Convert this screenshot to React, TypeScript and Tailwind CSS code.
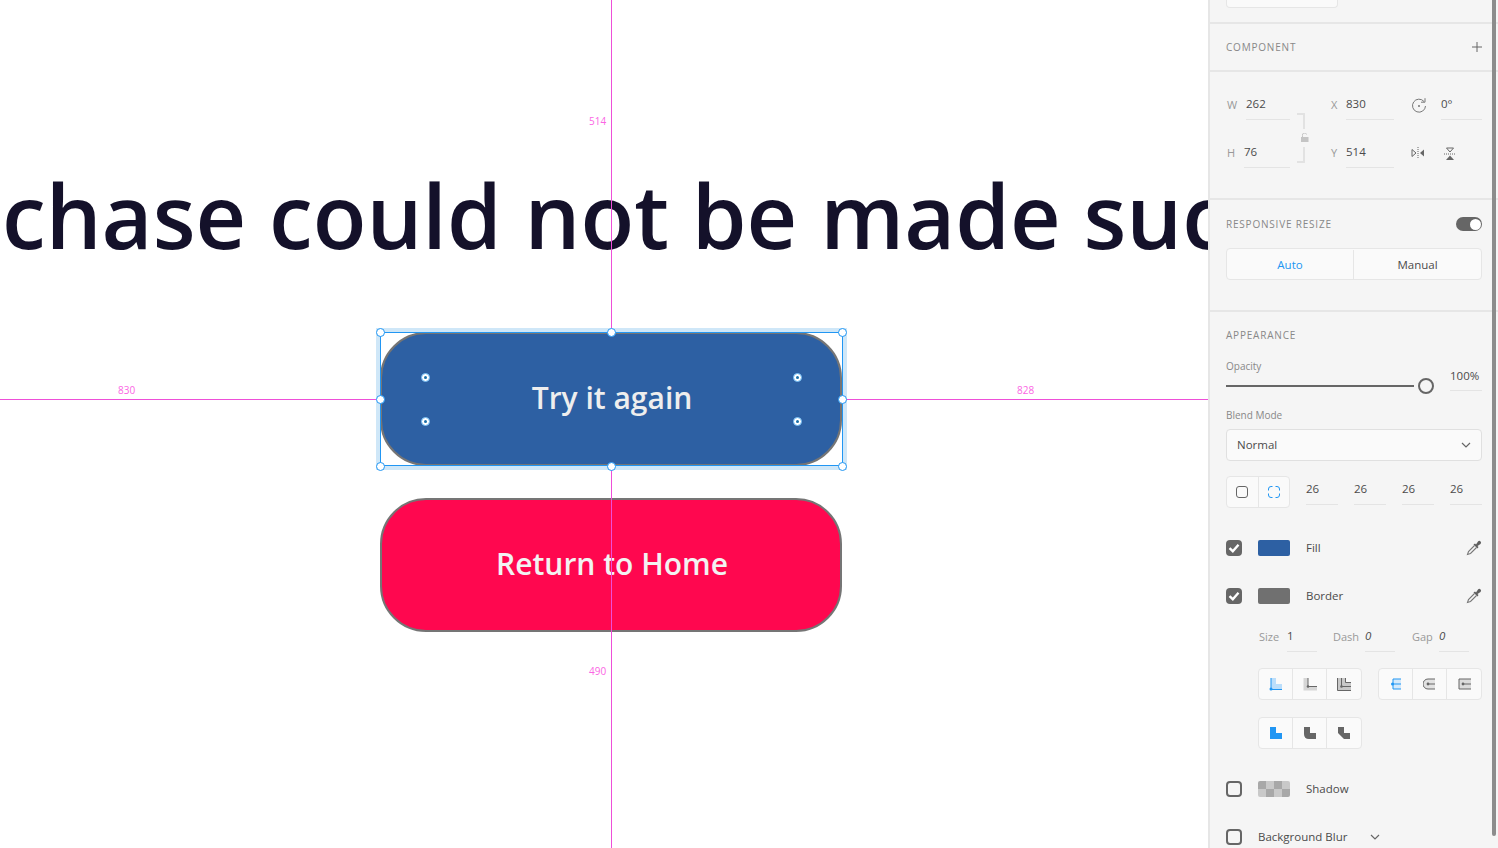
function Handle({ className }: { className: string }) {
  return <div className={`absolute h-[9px] w-[9px] rounded-full border border-[#2196f3] bg-white ${className}`} />;
}

function RadiusDot({ className }: { className: string }) {
  return (
    <div className={`absolute flex h-[9px] w-[9px] items-center justify-center rounded-full border border-[#6db9f2] bg-white ${className}`}>
      <div className="h-[3px] w-[3px] rounded-full bg-[#1a6fa8]" />
    </div>
  );
}

function Canvas() {
  return (
    <div className="relative h-full flex-1 overflow-hidden bg-white font-['Open_Sans',sans-serif]">
      <div className="absolute left-[2px] top-[155px] whitespace-nowrap text-[88px] font-semibold leading-[120px] text-[#14112a]">
        chase could not be made suc
      </div>

      <div className="absolute left-[380px] top-[332px] flex h-[134px] w-[462px] items-center justify-center rounded-[46px] border-2 border-[#757575] bg-[#2d60a3] pb-[4px] pl-[2px] text-[30px] font-semibold text-[#eeeeee]">
        Try it again
      </div>
      <div className="absolute left-[380px] top-[498px] flex h-[134px] w-[462px] items-center justify-center rounded-[46px] border-2 border-[#757575] bg-[#ff074f] pb-[4px] pl-[2px] text-[30px] font-semibold text-[#f2f2f2]">
        Return to Home
      </div>

      <div className="absolute left-[611px] top-0 h-[332px] w-px bg-[#ee4fd8]" />
      <div className="absolute left-[611px] top-[466px] h-[382px] w-px bg-[#ee4fd8]" />
      <div className="absolute left-0 top-[399px] h-px w-[380px] bg-[#ee4fd8]" />
      <div className="absolute left-[843px] top-[399px] h-px w-[365px] bg-[#ee4fd8]" />

      <div className="absolute left-[589px] top-[114px] text-[10px] leading-[14px] text-[#fb66e4]">514</div>
      <div className="absolute left-[118px] top-[383px] text-[10px] leading-[14px] text-[#fb66e4]">830</div>
      <div className="absolute left-[1017px] top-[383px] text-[10px] leading-[14px] text-[#fb66e4]">828</div>
      <div className="absolute left-[589px] top-[664px] text-[10px] leading-[14px] text-[#fb66e4]">490</div>

      <div className="absolute left-[376px] top-[328px] h-[142px] w-[471px] border-[4px] border-[#cfe7f8]" />
      <div className="absolute left-[380px] top-[332px] h-[134px] w-[463px] border border-[#2196f3]" />
      <Handle className="left-[376px] top-[328px]" />
      <Handle className="left-[607px] top-[328px]" />
      <Handle className="left-[838px] top-[328px]" />
      <Handle className="left-[376px] top-[395px]" />
      <Handle className="left-[838px] top-[395px]" />
      <Handle className="left-[376px] top-[462px]" />
      <Handle className="left-[607px] top-[462px]" />
      <Handle className="left-[838px] top-[462px]" />
      <RadiusDot className="left-[421px] top-[373px]" />
      <RadiusDot className="left-[793px] top-[373px]" />
      <RadiusDot className="left-[421px] top-[417px]" />
      <RadiusDot className="left-[793px] top-[417px]" />
    </div>
  );
}

function Field({ label, value, labelW, w, italic }: { label: string; value: string; labelW: string; w: string; italic?: boolean }) {
  return (
    <div className="flex items-start">
      <span className={`${labelW} pt-[1px] text-[11px] leading-[16px] text-[#999999]`}>{label}</span>
      <div className={`${w} h-[24px] border-b border-[#e4e4e4] text-[11.5px] leading-[16px] text-[#4b4b4b] ${italic ? "italic" : ""}`}>{value}</div>
    </div>
  );
}

function Check({ on }: { on: boolean }) {
  if (!on) return <div className="h-[16px] w-[16px] rounded-[4px] border-2 border-[#666666] bg-[#f5f5f5]" />;
  return (
    <div className="flex h-[16px] w-[16px] items-center justify-center rounded-[4px] bg-[#666666]">
      <svg width="12" height="12" viewBox="0 0 12 12" fill="none" stroke="white" strokeWidth="2.4">
        <path d="M1.5 6.2 L4.8 9.2 L10.5 2.8" />
      </svg>
    </div>
  );
}

function Dropper() {
  return (
    <svg width="16" height="16" viewBox="0 0 16 16" fill="none">
      <path d="M8.5 5.5 L2.5 11.5 L1.5 14.5 L4.5 13.5 L10.5 7.5" stroke="#777777" strokeWidth="1.1" fill="#f5f5f5" />
      <path d="M7.5 4.5 L9 3.5 L10 4.5 L12 1.5 Q13.2 0.3 14.6 1.4 Q15.7 2.8 14.5 4 L11.5 6 L12.5 7 L11.5 8.5 Z" fill="#5f5f5f" />
    </svg>
  );
}

function BtnGroup({ children }: { children: React.ReactNode }) {
  return (
    <div className="flex h-[32px] overflow-hidden rounded-[4px] border border-[#e6e6e6] bg-[#fafafa]">{children}</div>
  );
}

function Cell({ children, last }: { children: React.ReactNode; last?: boolean }) {
  return <div className={`flex h-full w-[34px] items-center justify-center ${last ? "" : "border-r border-[#e6e6e6]"}`}>{children}</div>;
}

function AlignIcon({ kind }: { kind: number }) {
  const blue = "#2196f3";
  const gray = "#666666";
  if (kind === 0)
    return (
      <svg width="13" height="13" viewBox="0 0 13 13">
        <path d="M2 0H7V6H13V11H2Z" fill="#bbdefb" />
        <path d="M2 0V11.5H13" fill="none" stroke={blue} strokeWidth="1" />
        <circle cx="2" cy="11" r="1.5" fill={blue} />
      </svg>
    );
  if (kind === 1)
    return (
      <svg width="14" height="13" viewBox="0 0 14 13">
        <path d="M0.5 0H5V8H14V12.5H0.5Z" fill="#d6d6d6" />
        <path d="M5 0V8.5H14" fill="none" stroke={gray} strokeWidth="1" />
        <circle cx="5" cy="8.5" r="1.3" fill={gray} />
      </svg>
    );
  if (kind === 2)
    return (
      <svg width="14" height="13" viewBox="0 0 14 13">
        <path d="M0.5 0H8V4H14V12.5H0.5Z" fill="#c8c8c8" />
        <path d="M0.5 0V12.5H14M4.5 0V8.5H14M8.5 0V4.5H14" fill="none" stroke={gray} strokeWidth="1" />
        <circle cx="4.5" cy="8.5" r="1.3" fill={gray} />
      </svg>
    );
  if (kind === 3)
    return (
      <svg width="10" height="12" viewBox="0 0 10 12">
        <path d="M2 1H10V11H2Z" fill="#d6eafb" />
        <path d="M10 1H2V11H10M2 6H10" fill="none" stroke={blue} strokeWidth="1" />
        <circle cx="1.5" cy="6" r="1.5" fill={blue} />
      </svg>
    );
  if (kind === 4)
    return (
      <svg width="13" height="12" viewBox="0 0 13 12">
        <path d="M12 1H5A5 5 0 0 0 5 11H12Z" fill="#e2e2e2" />
        <path d="M12 1H5A5 5 0 0 0 5 11H12M5 6H12" fill="none" stroke={gray} strokeWidth="1" />
        <circle cx="5" cy="6" r="1.4" fill={gray} />
      </svg>
    );
  return (
    <svg width="13" height="12" viewBox="0 0 13 12">
      <path d="M1 1H13V11H1Z" fill="#dcdcdc" />
      <path d="M13 1H1V11H13M5 6H13" fill="none" stroke={gray} strokeWidth="1" />
      <circle cx="5" cy="6" r="1.4" fill={gray} />
    </svg>
  );
}

function JoinIcon({ kind }: { kind: number }) {
  const d = kind === 0 ? "M1 1H7V7H13V13H1Z" : kind === 1 ? "M1 1H7V7H13V13H6Q1 13 1 8Z" : "M1 1H7V7H13V13H7L1 7Z";
  return (
    <svg width="14" height="14" viewBox="0 0 14 14">
      <path d={d} fill={kind === 0 ? "#2196f3" : "#666666"} />
    </svg>
  );
}

function Panel() {
  return (
    <div className="relative h-full w-[290px] shrink-0 overflow-hidden border-l-2 border-[#e6e6e6] bg-[#f5f5f5] font-['Open_Sans',sans-serif]">
      <div className="h-[24px] border-b-2 border-[#e6e6e6] pl-[16px]">
        <div className="h-[8px] w-[112px] rounded-b-[4px] border border-t-0 border-[#e6e6e6] bg-[#fafafa]" />
      </div>

      <div className="flex h-[48px] items-center justify-between border-b-2 border-[#e6e6e6] pl-[16px] pr-[16px]">
        <span className="text-[10px] tracking-[0.08em] text-[#888888]">COMPONENT</span>
        <svg width="10" height="10" viewBox="0 0 10 10" stroke="#666666" strokeWidth="1">
          <path d="M5 0V10M0 5H10" />
        </svg>
      </div>

      <div className="relative h-[128px] border-b-2 border-[#e6e6e6] pl-[17px] pt-[24px]">
        <div className="flex">
          <div className="flex w-[104px] flex-col gap-[24px]">
            <Field label="W" value="262" labelW="w-[19px]" w="w-[44px]" />
            <Field label="H" value="76" labelW="w-[17px]" w="w-[46px]" />
          </div>
          <div className="flex w-[80px] flex-col gap-[24px]">
            <Field label="X" value="830" labelW="w-[15px]" w="w-[48px]" />
            <Field label="Y" value="514" labelW="w-[15px]" w="w-[48px]" />
          </div>
          <div className="flex flex-col gap-[24px]">
            <div className="flex items-start">
              <div className="flex w-[30px] pt-[1px]">
                <svg width="16" height="16" viewBox="0 0 16 16" fill="none" stroke="#777777" strokeWidth="1">
                  <path d="M13 4.5A6.5 6.5 0 1 0 14.5 9" />
                  <path d="M14 1.2V5.2H10" />
                  <circle cx="8" cy="9" r="0.6" fill="#777777" />
                </svg>
              </div>
              <div className="h-[24px] w-[41px] border-b border-[#e4e4e4] text-[11.5px] leading-[16px] text-[#4b4b4b]">0°</div>
            </div>
            <div className="flex h-[24px] items-start gap-[19px] pt-[3px]">
              <svg width="14" height="12" viewBox="0 0 14 12">
                <path d="M1 2.5L5 6L1 9.5Z" fill="none" stroke="#666666" />
                <path d="M13 2.5L9 6L13 9.5Z" fill="#666666" />
                <path d="M7 0V12" stroke="#666666" strokeDasharray="1 1" />
              </svg>
              <svg width="12" height="14" viewBox="0 0 12 14">
                <path d="M2.5 1H9.5L6 5Z" fill="none" stroke="#666666" />
                <path d="M2 13H10L6 8.5Z" fill="#666666" />
                <path d="M0 7H12" stroke="#666666" strokeDasharray="1 1" />
              </svg>
            </div>
          </div>
        </div>
        <div className="absolute left-[87px] top-[41px] h-[16px] w-[8px] rounded-tr-[1px] border-r-2 border-t-2 border-[#e2e2e2]" />
        <div className="absolute left-[87px] top-[75px] h-[16px] w-[8px] rounded-br-[1px] border-b-2 border-r-2 border-[#e2e2e2]" />
        <svg width="8" height="9" viewBox="0 0 8 9" className="absolute left-[91px] top-[61px]">
          <path d="M1.5 4V2.5A2 2 0 0 1 5.5 1.5" fill="none" stroke="#c4c4c4" strokeWidth="1" />
          <rect x="0" y="4" width="7.5" height="5" fill="#c4c4c4" />
        </svg>
      </div>

      <div className="h-[112px] border-b-2 border-[#e6e6e6] px-[16px]">
        <div className="flex h-[48px] items-center justify-between">
          <span className="text-[10px] tracking-[0.08em] text-[#888888]">RESPONSIVE RESIZE</span>
          <div className="flex h-[14px] w-[26px] items-center justify-end rounded-full bg-[#666666] pr-[1px]">
            <div className="h-[11px] w-[11px] rounded-full bg-white" />
          </div>
        </div>
        <div className="flex h-[32px] rounded-[4px] border border-[#e6e6e6] bg-[#fafafa] pt-[1px] text-[11.5px]">
          <div className="flex w-[127px] items-center justify-center border-r border-[#e6e6e6] text-[#2196f3]">Auto</div>
          <div className="flex flex-1 items-center justify-center text-[#4b4b4b]">Manual</div>
        </div>
      </div>

      <div className="px-[16px]">
        <div className="pt-[16px] text-[10px] leading-[14px] tracking-[0.08em] text-[#888888]">APPEARANCE</div>
        <div className="mt-[17px] flex">
          <div className="w-[224px]">
            <div className="text-[10px] leading-[14px] text-[#888888]">Opacity</div>
            <div className="mt-[5px] flex h-[16px] items-center">
              <div className="h-[2px] w-[188px] bg-[#666666]" />
              <div className="ml-[4px] h-[16px] w-[16px] rounded-full border-2 border-[#666666] bg-[#f5f5f5]" />
            </div>
          </div>
          <div className="mt-[9px] h-[23px] w-[32px] border-b border-[#e4e4e4] text-[11.5px] leading-[16px] text-[#4b4b4b]">100%</div>
        </div>

        <div className="mt-[14px] text-[10px] leading-[14px] text-[#888888]">Blend Mode</div>
        <div className="mt-[7px] flex h-[32px] items-center justify-between rounded-[4px] border border-[#e0e0e0] bg-[#fafafa] pl-[10px] pr-[10px] text-[11.5px] text-[#4b4b4b]">
          Normal
          <svg width="10" height="6" viewBox="0 0 10 6" fill="none" stroke="#666666" strokeWidth="1.2">
            <path d="M1 1L5 5L9 1" />
          </svg>
        </div>

        <div className="mt-[15px] flex items-start justify-between">
          <div className="flex h-[32px] w-[64px] overflow-hidden rounded-[4px] border border-[#e6e6e6] bg-[#fafafa]">
            <div className="flex flex-1 items-center justify-center border-r border-[#e6e6e6]">
              <div className="h-[12px] w-[12px] rounded-[3px] border border-[#666666]" />
            </div>
            <div className="flex flex-1 items-center justify-center">
              <svg width="12" height="12" viewBox="0 0 12 12" fill="none" stroke="#2196f3">
                <path d="M0.5 4.5V3A2.5 2.5 0 0 1 3 0.5H4.5M7.5 0.5H9A2.5 2.5 0 0 1 11.5 3V4.5M11.5 7.5V9A2.5 2.5 0 0 1 9 11.5H7.5M4.5 11.5H3A2.5 2.5 0 0 1 0.5 9V7.5" />
              </svg>
            </div>
          </div>
          <div className="flex gap-[16px]">
            {["a", "b", "c", "d"].map((k) => (
              <div key={k} className="h-[29px] w-[32px] border-b border-[#e4e4e4] text-[11.5px] leading-[26px] text-[#4b4b4b]">26</div>
            ))}
          </div>
        </div>

        <div className="mt-[31px] flex h-[18px] items-center">
          <Check on />
          <div className="ml-[16px] h-[16px] w-[32px] rounded-[2px] bg-[#2d60a3]" />
          <span className="ml-[16px] flex-1 text-[11.5px] text-[#4b4b4b]">Fill</span>
          <Dropper />
        </div>
        <div className="mt-[30px] flex h-[18px] items-center">
          <Check on />
          <div className="ml-[16px] h-[16px] w-[32px] rounded-[2px] bg-[#707070]" />
          <span className="ml-[16px] flex-1 text-[11.5px] text-[#4b4b4b]">Border</span>
          <Dropper />
        </div>

        <div className="mt-[23px] flex pl-[33px]">
          <Field label="Size" value="1" labelW="w-[28px] text-[10px]" w="w-[30px]" />
          <div className="w-[16px]" />
          <Field label="Dash" value="0" labelW="w-[32px] text-[10px]" w="w-[30px]" italic />
          <div className="w-[17px]" />
          <Field label="Gap" value="0" labelW="w-[27px] text-[10px]" w="w-[30px]" italic />
        </div>

        <div className="mt-[16px] flex pl-[32px]">
          <BtnGroup>
            <Cell><AlignIcon kind={0} /></Cell>
            <Cell><AlignIcon kind={1} /></Cell>
            <Cell last><AlignIcon kind={2} /></Cell>
          </BtnGroup>
          <div className="ml-[16px]">
            <BtnGroup>
              <Cell><AlignIcon kind={3} /></Cell>
              <Cell><AlignIcon kind={4} /></Cell>
              <Cell last><AlignIcon kind={5} /></Cell>
            </BtnGroup>
          </div>
        </div>
        <div className="mt-[17px] flex pl-[32px]">
          <BtnGroup>
            <Cell><JoinIcon kind={0} /></Cell>
            <Cell><JoinIcon kind={1} /></Cell>
            <Cell last><JoinIcon kind={2} /></Cell>
          </BtnGroup>
        </div>

        <div className="mt-[31px] flex h-[18px] items-center">
          <Check on={false} />
          <div className="ml-[16px] grid h-[16px] w-[32px] grid-cols-4 grid-rows-2 overflow-hidden rounded-[2px]">
            {["bg-[#a8a8a8]", "bg-[#c9c9c9]", "bg-[#a8a8a8]", "bg-[#c9c9c9]", "bg-[#c9c9c9]", "bg-[#a8a8a8]", "bg-[#c9c9c9]", "bg-[#a8a8a8]"].map((c, i) => (
              <div key={i} className={c} />
            ))}
          </div>
          <span className="ml-[16px] text-[11.5px] text-[#4b4b4b]">Shadow</span>
        </div>
        <div className="mt-[30px] flex h-[18px] items-center">
          <Check on={false} />
          <span className="ml-[16px] text-[11.5px] text-[#4b4b4b]">Background Blur</span>
          <svg width="10" height="6" viewBox="0 0 10 6" fill="none" stroke="#666666" strokeWidth="1.2" className="ml-[23px]">
            <path d="M1 1L5 5L9 1" />
          </svg>
        </div>
      </div>

      <div className="absolute right-[2px] top-0 h-[836px] w-[4px] rounded-b-full bg-[#8c8c8c]" />
    </div>
  );
}

export default function App() {
  return (
    <div className="flex h-[848px] w-[1498px] overflow-hidden">
      <Canvas />
      <Panel />
    </div>
  );
}
